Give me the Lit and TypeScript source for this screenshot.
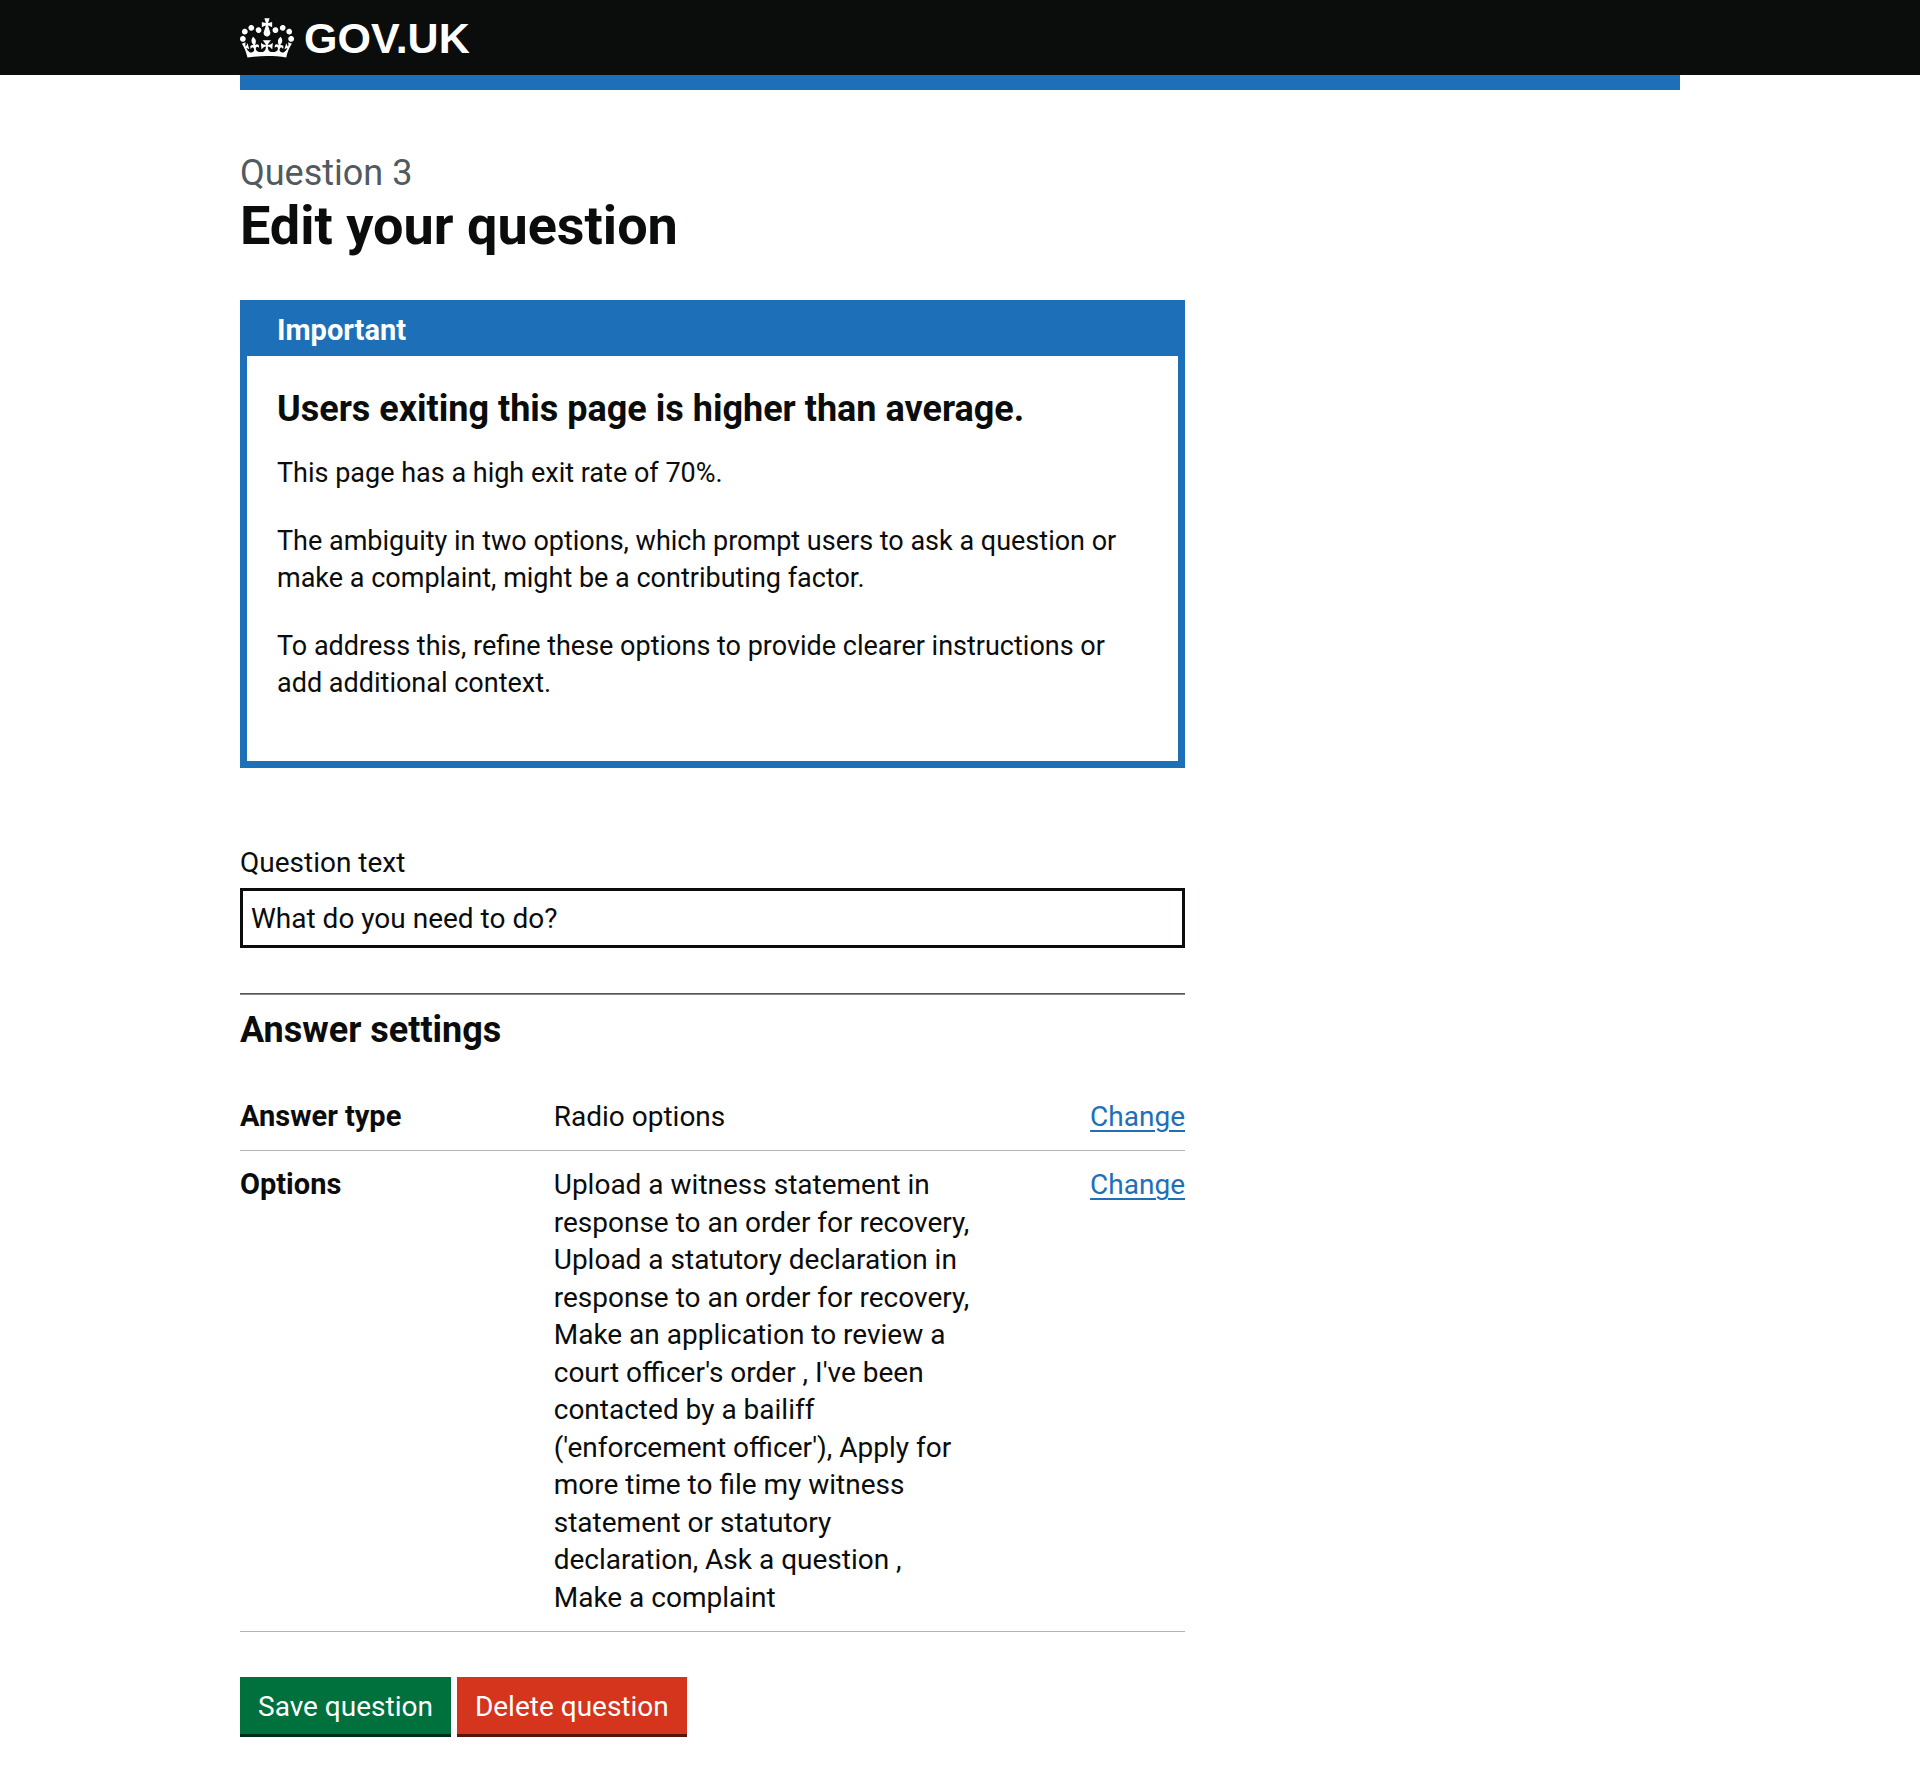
import { LitElement, html, css } from "lit";
import { customElement, state } from "lit/decorators.js";

interface Setting {
  key: string;
  value: string;
}

const OPTIONS = [
  "Upload a witness statement in response to an order for recovery",
  "Upload a statutory declaration in response to an order for recovery",
  "Make an application to review a court officer's order ",
  "I've been contacted by a bailiff ('enforcement officer')",
  "Apply for more time to file my witness statement or statutory declaration",
  "Ask a question ",
  "Make\u00a0a\u00a0complaint",
];

const SETTINGS: Setting[] = [
  { key: "Answer type", value: "Radio options" },
  { key: "Options", value: OPTIONS.join(", ") },
];

@customElement("site-header")
class SiteHeader extends LitElement {
  static styles = css`
    :host {
      display: block;
      background: linear-gradient(#0b0c0c, #0b0c0c) top / 100% 75px no-repeat;
      color: #fff;
    }
    .container {
      max-width: 1440px;
      margin: 0 auto;
    }
    .bar {
      display: flex;
      align-items: center;
      height: 75px;
      border-bottom: 15px solid #1d70b8;
    }
    .logo {
      display: flex;
      align-items: center;
      gap: 10px;
      color: #fff;
      text-decoration: none;
      font: 700 43px/48px "Liberation Sans", Arial, sans-serif;
    }
    .crown {
      display: block;
      width: 54px;
      height: 40px;
    }
  `;

  render() {
    return html`
      <header class="container">
        <div class="bar">
          <a class="logo" href="#">
            <svg class="crown" viewBox="0 0 132 97" aria-hidden="true">
              <path
                fill="currentColor"
                fill-rule="evenodd"
                d="M25 30.2c3.5 1.5 7.7-.2 9.1-3.7 1.5-3.6-.2-7.8-3.9-9.2-3.6-1.4-7.6.3-9.1 3.9-1.4 3.5.3 7.5 3.9 9zM9 39.5c3.6 1.5 7.8-.2 9.2-3.7 1.5-3.6-.2-7.8-3.9-9.1-3.6-1.5-7.6.2-9.1 3.8-1.4 3.5.3 7.5 3.8 9zM4.4 57.2c3.5 1.5 7.7-.2 9.1-3.8 1.5-3.6-.2-7.7-3.9-9.1-3.5-1.5-7.6.3-9.1 3.8-1.4 3.5.3 7.6 3.9 9.1zm38.3-21.4c3.5 1.5 7.7-.2 9.1-3.8 1.5-3.6-.2-7.7-3.9-9.1-3.6-1.5-7.6.3-9.1 3.8-1.3 3.6.4 7.7 3.9 9.1zm64.4-5.6c-3.6 1.5-7.8-.2-9.1-3.7-1.5-3.6.2-7.8 3.8-9.2 3.6-1.4 7.7.3 9.2 3.9 1.3 3.5-.4 7.5-3.9 9zm15.9 9.3c-3.6 1.5-7.7-.2-9.1-3.7-1.5-3.6.2-7.8 3.7-9.1 3.6-1.5 7.7.2 9.2 3.8 1.5 3.5-.3 7.5-3.8 9zm4.7 17.7c-3.6 1.5-7.8-.2-9.2-3.8-1.5-3.6.2-7.7 3.9-9.1 3.6-1.5 7.7.3 9.2 3.8 1.3 3.5-.4 7.6-3.9 9.1zM89.3 35.8c-3.6 1.5-7.8-.2-9.2-3.8-1.4-3.6.2-7.7 3.9-9.1 3.6-1.5 7.7.3 9.2 3.8 1.4 3.6-.3 7.7-3.9 9.1zM69.7 17.7l8.9 4.7V9.3l-8.9 2.8c-.2-.3-.5-.6-.9-.9L72.4 0H59.6l3.5 11.2c-.3.3-.6.5-.9.9l-8.8-2.8v13.1l8.8-4.7c.3.3.6.7.9.9l-5 15.4v.1c-.2.8-.4 1.6-.4 2.4 0 4.1 3.1 7.5 7 8.1h.2c.3 0 .7.1 1 .1.4 0 .7 0 1-.1h.2c4-.6 7.1-4.1 7.1-8.1 0-.8-.1-1.7-.4-2.4V34l-5.1-15.4c.4-.2.7-.6 1-.9zM66 92.8c16.9 0 32.8 1.1 47.1 3.2 4-16.9 8.9-26.7 14-33.5l-9.6-3.4c1 4.9 1.1 7.2 0 10.2-1.5-1.4-3-4.3-4.2-8.7L108.6 76c2.8-2 5-3.2 7.5-3.3-4.4 9.4-10 11.9-13.6 11.2-4.3-.8-6.3-4.6-5.6-7.9 1-4.7 5.7-5.9 8-.5 4.3-8.7-3-11.4-7.6-8.8 7.1-7.2 7.9-13.5 2.1-21.1-8 6.1-8.1 12.3-4.5 20.8-4.7-5.4-12.1-2.5-9.5 6.2 3.4-5.2 7.9-2 7.2 3.1-.6 4.3-6.4 7.8-13.5 7.2-10.3-.9-10.9-8-11.2-13.8 2.5-.5 7.1 1.8 11 7.3L80.2 60c-4.1 4.4-8 5.3-12.3 5.4 1.4-4.4 8-11.6 8-11.6H55.5s6.4 7.2 7.9 11.6c-4.2-.1-8-1-12.3-5.4l1.4 16.4c3.9-5.5 8.5-7.7 10.9-7.3-.3 5.8-.9 12.8-11.1 13.8-7.2.6-12.9-2.9-13.5-7.2-.7-5 3.8-8.3 7.1-3.1 2.7-8.7-4.6-11.6-9.4-6.2 3.7-8.5 3.6-14.7-4.6-20.8-5.8 7.6-5 13.9 2.2 21.1-4.7-2.6-11.9.1-7.7 8.8 2.3-5.5 7.1-4.2 8.1.5.7 3.3-1.3 7.1-5.7 7.9-3.5.7-9-1.8-13.5-11.2 2.5.1 4.7 1.3 7.5 3.3l-4.7-15.4c-1.2 4.4-2.7 7.2-4.3 8.7-1.1-3-.9-5.3 0-10.2l-9.5 3.4c5 6.9 9.9 16.7 14 33.5 14.8-2.1 30.8-3.2 47.7-3.2z"
              />
            </svg>
            <span>GOV.UK</span>
          </a>
        </div>
      </header>
    `;
  }
}

@customElement("notification-banner")
class NotificationBanner extends LitElement {
  static styles = css`
    :host {
      display: block;
    }
    .banner {
      border: 7px solid #1d70b8;
    }
    .head {
      background: #1d70b8;
      padding: 4px 30px 7px;
    }
    .title {
      margin: 0;
      color: #fff;
      font-size: 29px;
      line-height: 38px;
    }
    .content {
      padding: 31px 30px 58px;
      font-size: 27px;
      line-height: 1.389;
    }
    .heading {
      margin: 0 0 23px;
      font-size: 36px;
      line-height: 45px;
    }
    .text {
      margin: 0;
    }
    .text + .text {
      margin-top: 30px;
    }
  `;

  render() {
    return html`
      <section class="banner" aria-labelledby="banner-title">
        <div class="head"><h2 class="title" id="banner-title">Important</h2></div>
        <div class="content">
          <h3 class="heading">Users exiting this page is higher than average.</h3>
          <p class="text">This page has a high exit rate of 70%.</p>
          <p class="text">
            The ambiguity in two options, which prompt users to ask a question or make a complaint,
            might be a contributing factor.
          </p>
          <p class="text">
            To address this, refine these options to provide clearer instructions or add additional
            context.
          </p>
        </div>
      </section>
    `;
  }
}

@customElement("app-root")
class AppRoot extends LitElement {
  static styles = css`
    :host {
      display: block;
      background: #fff;
      color: #0b0c0c;
      font-family: Roboto, "Liberation Sans", Arial, sans-serif;
      font-size: 28px;
      line-height: 1.34;
    }
    .main {
      max-width: 1440px;
      margin: 0 auto;
      padding: 63px 0 30px;
    }
    .column {
      width: 65.625%;
    }
    .caption {
      display: block;
      margin-bottom: 5px;
      color: #505a5f;
      font-size: 36px;
      line-height: 40px;
    }
    .title {
      margin: 0 0 46px;
      font-size: 54px;
      line-height: 56px;
    }
    .field {
      display: flex;
      flex-direction: column;
      gap: 6px;
      margin-top: 76px;
    }
    .label {
      line-height: 38px;
    }
    .input {
      box-sizing: border-box;
      width: 100%;
      height: 60px;
      padding: 2px 8px 0;
      border: 3px solid #0b0c0c;
      border-radius: 0;
      background: #fff;
      color: #0b0c0c;
      font: inherit;
    }
    .rule {
      margin: 45px 0 13px;
      border: 0;
      border-top: 1px solid #555;
      border-bottom: 1px solid #888;
    }
    .subtitle {
      margin: 0 0 30px;
      font-size: 36px;
      line-height: 45px;
    }
    .list {
      margin: 0;
    }
    .row {
      display: grid;
      grid-template-columns: 33.2% 44.4% 1fr;
      padding: 15px 0;
      border-bottom: 1px solid #b1b4b6;
    }
    .key {
      font-weight: 700;
      font-size: 29px;
      line-height: 37px;
    }
    .value {
      margin: 0;
    }
    .action {
      margin: 0;
      text-align: right;
    }
    .link {
      color: #1d70b8;
      text-decoration: underline;
      text-decoration-thickness: 2px;
      text-underline-offset: 4px;
    }
    .buttons {
      display: flex;
      gap: 6px;
      margin-top: 45px;
    }
    .button {
      height: 57px;
      padding: 2px 18px 0;
      border: 0;
      border-radius: 0;
      background: #00703c;
      box-shadow: 0 3px 0 #002d18;
      color: #fff;
      font: inherit;
    }
    .button.warning {
      background: #d4351c;
      box-shadow: 0 3px 0 #55150b;
    }
  `;

  @state() private question = "What do you need to do?";

  render() {
    return html`
      <site-header></site-header>
      <main class="main">
        <div class="column">
          <span class="caption">Question 3</span>
          <h1 class="title">Edit your question</h1>
          <notification-banner></notification-banner>
          <form @submit=${(e: Event) => e.preventDefault()}>
            <div class="field">
              <label class="label" for="question-text">Question text</label>
              <input
                class="input"
                id="question-text"
                type="text"
                .value=${this.question}
                @input=${(e: Event) => (this.question = (e.target as HTMLInputElement).value)}
              />
            </div>
            <hr class="rule" />
            <h2 class="subtitle">Answer settings</h2>
            <dl class="list">
              ${SETTINGS.map(
                (s) => html`
                  <div class="row">
                    <dt class="key">${s.key}</dt>
                    <dd class="value">${s.value}</dd>
                    <dd class="action"><a class="link" href="#">Change</a></dd>
                  </div>
                `
              )}
            </dl>
            <div class="buttons">
              <button class="button" type="submit">Save question</button>
              <button class="button warning" type="button">Delete question</button>
            </div>
          </form>
        </div>
      </main>
    `;
  }
}
